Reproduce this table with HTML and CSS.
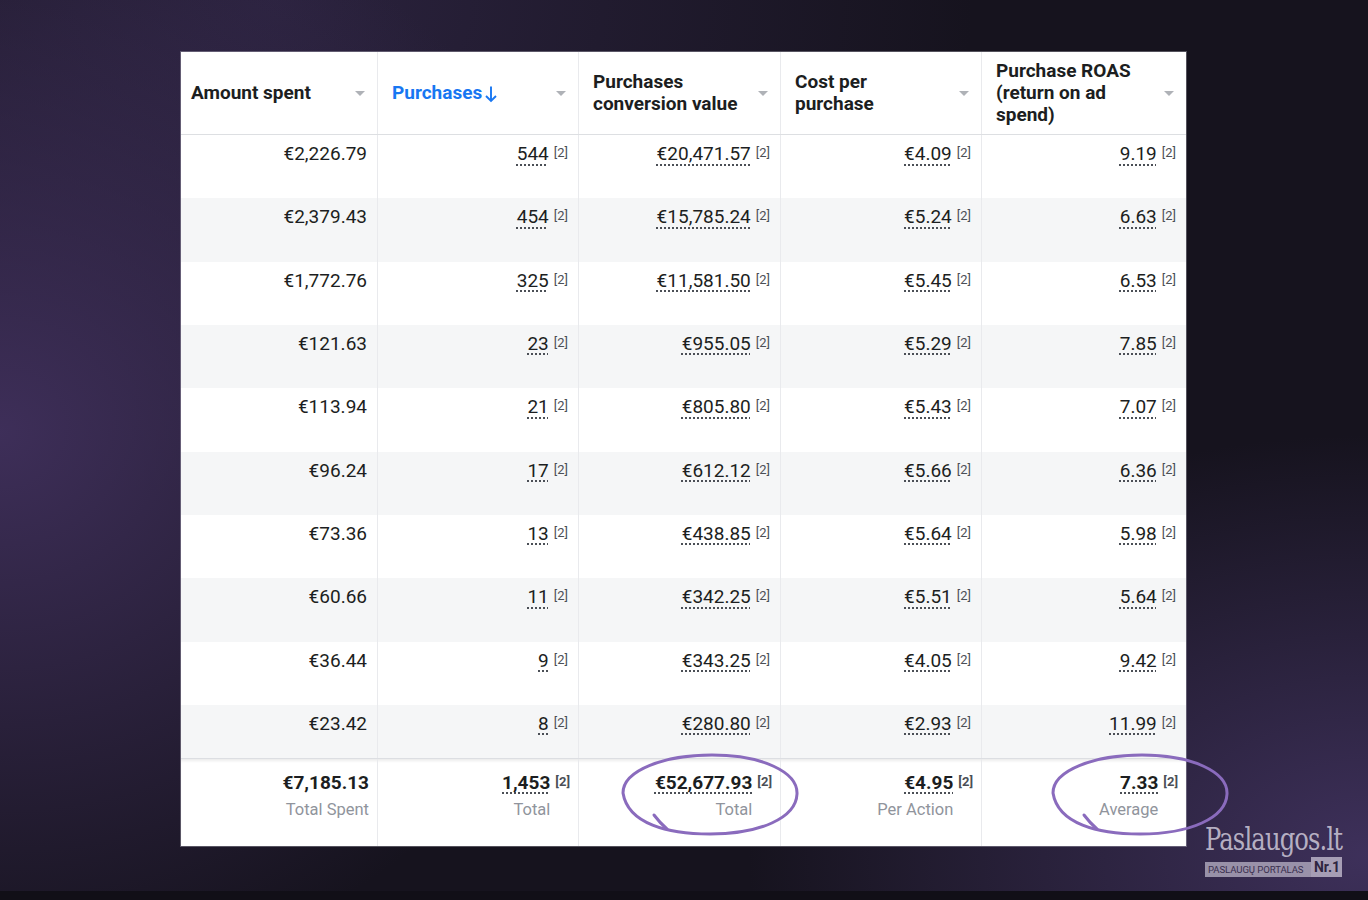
FILE: index.html
```html
<!DOCTYPE html>
<html lang="en">
<head>
<meta charset="utf-8">
<title>Ads report</title>
<link rel="stylesheet" href="styles.css">
</head>
<body>
<div class="page">
  <main class="report">
    <div class="table">
      <div class="row head">
        <div class="hcell"><span class="hlabel">Amount spent</span><span class="caret"></span></div>
        <div class="hcell"><span class="hlabel sorted">Purchases<svg class="arrow" viewBox="0 0 12 18" width="12" height="18"><path d="M6 1.5V16M1 11l5 5 5-5" fill="none" stroke="#1877f2" stroke-width="1.9"/></svg></span><span class="caret"></span></div>
        <div class="hcell"><span class="hlabel">Purchases conversion value</span><span class="caret"></span></div>
        <div class="hcell"><span class="hlabel">Cost per purchase</span><span class="caret"></span></div>
        <div class="hcell"><span class="hlabel">Purchase ROAS (return on ad spend)</span><span class="caret"></span></div>
      </div>

      <div class="row"><div class="cell"><span class="plain">€2,226.79</span></div><div class="cell"><span class="v">544</span><span class="sup">[2]</span></div><div class="cell"><span class="v">€20,471.57</span><span class="sup">[2]</span></div><div class="cell"><span class="v">€4.09</span><span class="sup">[2]</span></div><div class="cell"><span class="v">9.19</span><span class="sup">[2]</span></div></div>
      <div class="row alt"><div class="cell"><span class="plain">€2,379.43</span></div><div class="cell"><span class="v">454</span><span class="sup">[2]</span></div><div class="cell"><span class="v">€15,785.24</span><span class="sup">[2]</span></div><div class="cell"><span class="v">€5.24</span><span class="sup">[2]</span></div><div class="cell"><span class="v">6.63</span><span class="sup">[2]</span></div></div>
      <div class="row"><div class="cell"><span class="plain">€1,772.76</span></div><div class="cell"><span class="v">325</span><span class="sup">[2]</span></div><div class="cell"><span class="v">€11,581.50</span><span class="sup">[2]</span></div><div class="cell"><span class="v">€5.45</span><span class="sup">[2]</span></div><div class="cell"><span class="v">6.53</span><span class="sup">[2]</span></div></div>
      <div class="row alt"><div class="cell"><span class="plain">€121.63</span></div><div class="cell"><span class="v">23</span><span class="sup">[2]</span></div><div class="cell"><span class="v">€955.05</span><span class="sup">[2]</span></div><div class="cell"><span class="v">€5.29</span><span class="sup">[2]</span></div><div class="cell"><span class="v">7.85</span><span class="sup">[2]</span></div></div>
      <div class="row"><div class="cell"><span class="plain">€113.94</span></div><div class="cell"><span class="v">21</span><span class="sup">[2]</span></div><div class="cell"><span class="v">€805.80</span><span class="sup">[2]</span></div><div class="cell"><span class="v">€5.43</span><span class="sup">[2]</span></div><div class="cell"><span class="v">7.07</span><span class="sup">[2]</span></div></div>
      <div class="row alt"><div class="cell"><span class="plain">€96.24</span></div><div class="cell"><span class="v">17</span><span class="sup">[2]</span></div><div class="cell"><span class="v">€612.12</span><span class="sup">[2]</span></div><div class="cell"><span class="v">€5.66</span><span class="sup">[2]</span></div><div class="cell"><span class="v">6.36</span><span class="sup">[2]</span></div></div>
      <div class="row"><div class="cell"><span class="plain">€73.36</span></div><div class="cell"><span class="v">13</span><span class="sup">[2]</span></div><div class="cell"><span class="v">€438.85</span><span class="sup">[2]</span></div><div class="cell"><span class="v">€5.64</span><span class="sup">[2]</span></div><div class="cell"><span class="v">5.98</span><span class="sup">[2]</span></div></div>
      <div class="row alt"><div class="cell"><span class="plain">€60.66</span></div><div class="cell"><span class="v">11</span><span class="sup">[2]</span></div><div class="cell"><span class="v">€342.25</span><span class="sup">[2]</span></div><div class="cell"><span class="v">€5.51</span><span class="sup">[2]</span></div><div class="cell"><span class="v">5.64</span><span class="sup">[2]</span></div></div>
      <div class="row"><div class="cell"><span class="plain">€36.44</span></div><div class="cell"><span class="v">9</span><span class="sup">[2]</span></div><div class="cell"><span class="v">€343.25</span><span class="sup">[2]</span></div><div class="cell"><span class="v">€4.05</span><span class="sup">[2]</span></div><div class="cell"><span class="v">9.42</span><span class="sup">[2]</span></div></div>
      <div class="row alt last"><div class="cell"><span class="plain">€23.42</span></div><div class="cell"><span class="v">8</span><span class="sup">[2]</span></div><div class="cell"><span class="v">€280.80</span><span class="sup">[2]</span></div><div class="cell"><span class="v">€2.93</span><span class="sup">[2]</span></div><div class="cell"><span class="v">11.99</span><span class="sup">[2]</span></div></div>

      <div class="row foot">
        <div class="cell"><div class="stack"><span class="fv plain">€7,185.13</span><span class="fl">Total Spent</span></div></div>
        <div class="cell"><div class="stack"><span class="fv v">1,453</span><span class="fl">Total</span></div><span class="sup">[2]</span></div>
        <div class="cell"><div class="stack"><span class="fv v">€52,677.93</span><span class="fl">Total</span></div><span class="sup">[2]</span></div>
        <div class="cell"><div class="stack"><span class="fv v">€4.95</span><span class="fl">Per Action</span></div><span class="sup">[2]</span></div>
        <div class="cell"><div class="stack"><span class="fv v">7.33</span><span class="fl">Average</span></div><span class="sup">[2]</span></div>
      </div>
    </div>
  </main>

  <svg class="marks" viewBox="0 0 1368 900" width="1368" height="900" aria-hidden="true">
    <g fill="none" stroke="#8a6bbd" stroke-width="3" stroke-linecap="round">
      <path d="M623 793 C 623 770 665 755 712 755 C 762 755 798 772 797 794 C 796 818 760 834 710 834 C 668 834 628 824 623 793 Z"/>
      <path d="M654 815 Q 660 823 667 829"/>
      <path d="M1053 793 C 1053 770 1095 755 1142 755 C 1192 755 1228 772 1227 794 C 1226 818 1190 834 1140 834 C 1098 834 1058 824 1053 793 Z"/>
      <path d="M1084 815 Q 1090 823 1097 829"/>
    </g>
  </svg>

  <div class="logo">
    <div class="logo-name">Paslaugos.lt</div>
    <div class="logo-bar"><span class="bar-text">PASLAUGŲ PORTALAS</span><span class="nr">Nr.1</span></div>
  </div>
</div>
</body>
</html>
```

FILE: styles.css
```css
* { box-sizing: border-box; }
html, body { margin: 0; padding: 0; }
body {
  width: 1368px;
  height: 900px;
  overflow: hidden;
  font-family: Roboto, "Liberation Sans", Arial, sans-serif;
  color: #1c1e21;
  background:
    linear-gradient(to bottom, transparent 891px, #110f17 891px),
    radial-gradient(ellipse 620px 560px at 0% 48%, rgba(64, 48, 92, 0.95), rgba(64, 48, 92, 0) 100%),
    radial-gradient(ellipse 620px 420px at 100% 95%, rgba(64, 50, 94, 0.95), rgba(64, 50, 94, 0) 100%),
    radial-gradient(ellipse 700px 500px at 20% 0%, rgba(48, 38, 70, 0.8), rgba(48, 38, 70, 0) 100%),
    #16131e;
}
.page { position: relative; width: 1368px; height: 900px; }
.report { padding: 52px 0 0 181px; }

.table {
  width: 1005px;
  background: #fff;
  box-shadow: 0 0 0 1px rgba(200, 200, 208, 0.35);
}
.row {
  display: grid;
  grid-template-columns: 197px 201px 202px 201px 204px;
  height: 63.33px;
  background: #fff;
}
.row.alt { background: #f5f6f7; }
.row.last { height: 53px; }

.head { height: 83px; border-bottom: 1px solid #dddfe2; }
.hcell {
  display: flex;
  align-items: center;
  justify-content: space-between;
  padding: 0 12px 0 14px;
  border-right: 1px solid #e9eaed;
}
.hcell:first-child { padding-left: 10px; }
.hcell:last-child, .cell:last-child { border-right: none; }
.hlabel {
  max-width: 150px;
  font-size: 19px;
  font-weight: 700;
  line-height: 22px;
  color: #1c1e21;
}
.hlabel.sorted { color: #1877f2; display: flex; align-items: center; }
.arrow { margin-left: 3px; margin-top: 1px; }
.caret {
  width: 0; height: 0;
  border-left: 5px solid transparent;
  border-right: 5px solid transparent;
  border-top: 5px solid #afb2b7;
  flex-shrink: 0;
}

.cell {
  display: flex;
  justify-content: flex-end;
  align-items: flex-start;
  padding: 8px 10px 0 0;
  border-right: 1px solid #e9eaed;
  font-size: 19px;
  line-height: 22px;
}
.plain { color: #1c1e21; }
.v {
  color: #1c1e21;
  text-decoration: underline dotted #4b4f56;
  text-decoration-thickness: 1.5px;
  text-underline-offset: 4px;
}
.sup {
  font-size: 13px;
  line-height: 16px;
  color: #4b4f56;
  margin-left: 5px;
  margin-top: 2px;
}

.foot {
  height: 88px;
  border-top: 1px solid #dcdee2;
  box-shadow: inset 0 3px 3px -1px rgba(0, 0, 0, 0.08);
}
.foot .cell { padding-top: 13px; padding-right: 8px; }
.stack { display: flex; flex-direction: column; align-items: flex-end; }
.fv { font-weight: 700; font-size: 19px; line-height: 22px; }
.fl { font-size: 16.5px; line-height: 22px; color: #90949c; margin-top: 5px; }
.foot .sup { font-weight: 700; color: #4b4f56; margin-top: 2px; }

.marks { position: absolute; left: 0; top: 0; pointer-events: none; }

.logo {
  position: absolute;
  left: 1205px;
  top: 822px;
  width: 137px;
}
.logo-name {
  font-family: "DejaVu Serif Condensed", "DejaVu Serif", serif;
  font-size: 31px;
  line-height: 35px;
  letter-spacing: -1px;
  color: rgba(205, 200, 216, 0.85);
  white-space: nowrap;
  transform: scaleX(0.87);
  transform-origin: left center;
}
.logo-bar { display: flex; align-items: flex-end; height: 20px; }
.bar-text {
  flex: 1 1 auto;
  height: 15px;
  line-height: 15px;
  background: rgba(170, 163, 185, 0.85);
  color: #3a2f4f;
  font-family: Roboto, "Liberation Sans", sans-serif;
  font-size: 9.6px;
  letter-spacing: -0.1px;
  padding-left: 3px;
  white-space: nowrap;
}
.nr {
  flex: 0 0 auto;
  height: 20px;
  line-height: 20px;
  background: rgba(178, 171, 192, 0.9);
  color: #2e2540;
  font-family: Roboto, "Liberation Sans", sans-serif;
  font-weight: 700;
  font-size: 14px;
  padding: 0 2px 0 3px;
}
```
